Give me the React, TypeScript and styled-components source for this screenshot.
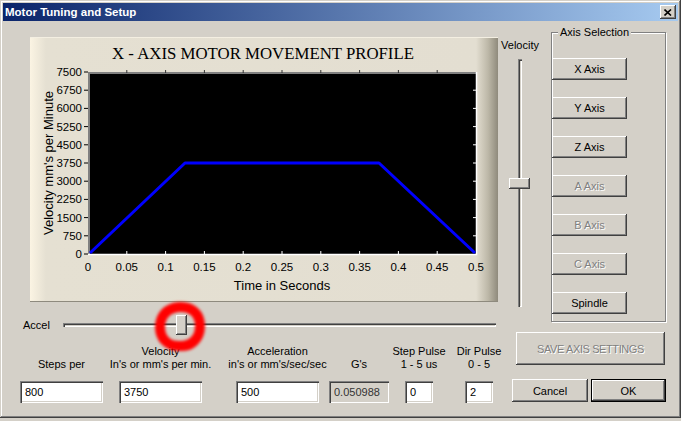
import React from "react";
import styled, {createGlobalStyle} from "styled-components";

const GlobalStyle = createGlobalStyle`
    html, body {
        margin: 0;
        padding: 0;
        background: #D4D0C8;
    }
    body {
        font-family: "Liberation Sans", Arial, sans-serif;
        font-size: 11px;
        color: #000;
    }
`

const Window = styled.div`
    width: 681px;
    height: 418px;
    box-sizing: border-box;
    padding: 3px;
    background: #D4D0C8;
    box-shadow: inset -1px -1px #404040, inset 1px 1px #D4D0C8,
                inset -2px -2px #808080, inset 2px 2px #FFFFFF;
    display: flex;
    flex-direction: column;
`

const TitleBar = styled.div`
    height: 18px;
    display: flex;
    align-items: center;
    justify-content: space-between;
    padding: 0 2px 0 2px;
    background: linear-gradient(to right, #0A246A, #A6CAF0);
`

const TitleText = styled.span`
    color: #FFF;
    font-weight: bold;
    font-size: 11.5px;
`

const raised = `
    background: #D4D0C8;
    box-shadow: inset -1px -1px #404040, inset 1px 1px #FFFFFF,
                inset -2px -2px #808080, inset 2px 2px #D4D0C8;
`

const CloseButton = styled.div`
    ${raised};
    width: 16px;
    height: 14px;
    display: flex;
    align-items: center;
    justify-content: center;
`

const Body = styled.div`
    display: flex;
    padding-left: 17px;
`

const LeftCol = styled.div`
    width: 480px;
    display: flex;
    flex-direction: column;
`

const ChartPanel = styled.div`
    margin: 16px 0 0 10px;
    width: 468px;
    height: 265px;
    box-sizing: border-box;
    display: flex;
    flex-direction: column;
    border-top: 1px solid #F4EFE2;
    border-bottom: 1px solid #8E8A7E;
    background: linear-gradient(to right, #FBF4E3 0, #E5E0D2 16px, #E3DED1 calc(100% - 22px),
                #BDB8A8 calc(100% - 10px), #8F8A7C 100%);
`

const ChartTitle = styled.div`
    height: 27px;
    box-sizing: border-box;
    padding-top: 8px;
    line-height: 16px;
    padding-right: 2px;
    text-align: center;
    font-family: "Liberation Serif", "Times New Roman", serif;
    font-size: 16.8px;
    color: #000;
`

const ChartSvg = styled.svg`
    display: block;
    overflow: visible;
    font-family: "Liberation Sans", Arial, sans-serif;
`

const AccelRow = styled.div`
    margin-top: 13px;
    height: 20px;
    display: flex;
    align-items: center;
`

const AccelLabel = styled.span`
    margin-left: 3px;
    width: 40px;
`

const HTrack = styled.div`
    position: relative;
    width: 433px;
    height: 4px;
    box-shadow: inset 1px 1px #808080, inset 2px 2px #404040,
                inset -1px -1px #FFFFFF, inset -2px -2px #D4D0C8;
`

const Thumb = styled.div<{ $w: number; $h: number }>`
    ${raised};
    position: absolute;
    width: ${p => p.$w}px;
    height: ${p => p.$h}px;
`

const Annotation = styled.svg`
    position: absolute;
    left: 87px;
    top: -24px;
    pointer-events: none;
`

const FieldsRow = styled.div`
    margin-top: 10px;
    display: flex;
    align-items: flex-start;
`

const Field = styled.div<{ $w: number; $ml: number }>`
    width: ${p => p.$w}px;
    margin-left: ${p => p.$ml}px;
    display: flex;
    flex-direction: column;
`

const Caption = styled.div`
    height: 26px;
    margin: 0 -40px;
    display: flex;
    flex-direction: column;
    justify-content: flex-end;
    align-items: center;
    line-height: 13px;
    white-space: nowrap;
`

const TextBox = styled.input<{ $readonly?: boolean }>`
    margin-top: 10px;
    height: 22px;
    width: 100%;
    box-sizing: border-box;
    border: none;
    outline: none;
    padding: 0 0 0 5px;
    font: inherit;
    color: ${p => p.$readonly ? '#333' : '#000'};
    background: ${p => p.$readonly ? '#D4D0C8' : '#FFFFFF'};
    box-shadow: inset 1px 1px #808080, inset 2px 2px #404040,
                inset -1px -1px #FFFFFF, inset -2px -2px #D4D0C8;
`

const RightCol = styled.div`
    width: 166px;
    display: flex;
    flex-direction: column;
`

const TopRow = styled.div`
    display: flex;
    align-items: flex-start;
`

const VelocityCol = styled.div`
    width: 40px;
    padding-top: 18px;
    display: flex;
    flex-direction: column;
    align-items: center;
    line-height: 13px;
`

const VTrack = styled.div`
    position: relative;
    margin-top: 7px;
    width: 4px;
    height: 248px;
    box-shadow: inset 1px 1px #808080, inset 2px 2px #404040,
                inset -1px -1px #FFFFFF, inset -2px -2px #D4D0C8;
`

const GroupBox = styled.div`
    position: relative;
    margin: 11px 0 0 11px;
    width: 115px;
    height: 290px;
    box-sizing: border-box;
    padding-top: 25px;
    border: 1px solid #808080;
    box-shadow: inset 1px 1px #FFFFFF, 1px 1px #FFFFFF;
    display: flex;
    flex-direction: column;
    gap: 17px;
`

const GroupLegend = styled.span`
    position: absolute;
    top: -7px;
    left: 6px;
    padding: 0 2px;
    line-height: 13px;
    background: #D4D0C8;
`

const Button = styled.button<{ $w: number; $h: number; $default?: boolean }>`
    width: ${p => p.$w}px;
    height: ${p => p.$h}px;
    padding: 0;
    border: none;
    font: inherit;
    color: #000;
    background: #D4D0C8;
    box-shadow: ${p => p.$default
        ? 'inset 0 0 0 1px #000, inset -2px -2px #404040, inset 2px 2px #FFFFFF, inset -3px -3px #808080'
        : 'inset -1px -1px #404040, inset 1px 1px #FFFFFF, inset -2px -2px #808080, inset 2px 2px #D4D0C8'};

    &:disabled {
        color: #808080;
        text-shadow: 1px 1px #FFFFFF;
    }
`

const SaveButton = styled(Button)`
    margin: 10px 0 0 16px;
    letter-spacing: -0.4px;
`

const DialogButtons = styled.div`
    margin: 14px 0 0 12px;
    display: flex;
    gap: 3px;
`

// geometry of the plot, in svg coordinates
const L = 58, R = 446, T = 7, B = 189
const yOf = (v: number) => B - (v / 7500) * (B - T)
const xOf = (t: number) => L + (t / 0.5) * (R - L)

const yTicks = Array.from({length: 11}, (_, i) => i * 750)
const xTicks = Array.from({length: 11}, (_, i) => parseFloat((i * 0.05).toFixed(2)))

const MotionChart = () => {
    const profile = [
        [xOf(0) + 2, B - 1],
        [xOf(0.125), yOf(3750)],
        [xOf(0.375), yOf(3750)],
        [xOf(0.5) - 1, B - 1],
    ].map(p => p.join(',')).join(' ')

    return (
        <ChartSvg width={468} height={236}>
            <rect x={L} y={T} width={R - L} height={B - T} fill="#000"/>
            <path d={`M${L + 1} ${B} V${T + 1} H${R}`} stroke="#808080" strokeWidth={2} fill="none"/>
            <path d={`M${L} ${B + 0.5} H${R + 0.5} V${T}`} stroke="#FFF" strokeWidth={1.5} fill="none"/>

            {yTicks.map(v => (
                <g key={v}>
                    <line x1={L - 4} x2={L} y1={yOf(v)} y2={yOf(v)} stroke="#000"/>
                    {v > 0 && v < 7500 &&
                        <line x1={R - 3} x2={R + 1} y1={yOf(v)} y2={yOf(v)} stroke="#FFF"/>}
                    <text x={52} y={yOf(v) + 4} fontSize={11.5} textAnchor="end">{v}</text>
                </g>
            ))}

            {xTicks.map(t => (
                <g key={t}>
                    {t > 0 && t < 0.5 && <>
                        <line x1={xOf(t)} x2={xOf(t)} y1={B - 3} y2={B + 1} stroke="#FFF"/>
                        <line x1={xOf(t)} x2={xOf(t)} y1={T - 2} y2={T + 1} stroke="#333"/>
                    </>}
                    <text x={xOf(t)} y={B + 17} fontSize={11.5} textAnchor="middle">{t}</text>
                </g>
            ))}

            <polyline points={profile} stroke="#0000FF" strokeWidth={3} fill="none" strokeLinejoin="round"/>

            <text x={252} y={B + 36} fontSize={13} textAnchor="middle">Time in Seconds</text>
            <text x={23} y={(T + B) / 2} fontSize={13} textAnchor="middle"
                  transform={`rotate(-90 23 ${(T + B) / 2})`}>Velocity mm's per Minute</text>
        </ChartSvg>
    )
}

const fields = [
    {top: '', bottom: 'Steps per', value: '800', w: 83, ml: 0},
    {top: 'Velocity', bottom: "In's or mm's per min.", value: '3750', w: 83, ml: 16},
    {top: 'Acceleration', bottom: "in's or mm's/sec/sec", value: '500', w: 83, ml: 34},
    {top: '', bottom: "G's", value: '0.050988', w: 60, ml: 10, readonly: true},
    {top: 'Step Pulse', bottom: '1 - 5 us', value: '0', w: 28, ml: 16},
    {top: 'Dir Pulse', bottom: '0 - 5', value: '2', w: 28, ml: 32},
]

const axes = [
    {label: 'X Axis', enabled: true},
    {label: 'Y Axis', enabled: true},
    {label: 'Z Axis', enabled: true},
    {label: 'A Axis', enabled: false},
    {label: 'B Axis', enabled: false},
    {label: 'C Axis', enabled: false},
    {label: 'Spindle', enabled: true},
]

export default function App() {
    return (
        <>
            <GlobalStyle/>
            <Window>
                <TitleBar>
                    <TitleText>Motor Tuning and Setup</TitleText>
                    <CloseButton>
                        <svg width={8} height={7} viewBox="0 0 8 7">
                            <path d="M0.5 0.5 L7 6.5 M7 0.5 L0.5 6.5" stroke="#000" strokeWidth={1.6}/>
                        </svg>
                    </CloseButton>
                </TitleBar>

                <Body>
                    <LeftCol>
                        <ChartPanel>
                            <ChartTitle>X - AXIS MOTOR MOVEMENT PROFILE</ChartTitle>
                            <MotionChart/>
                        </ChartPanel>

                        <AccelRow>
                            <AccelLabel>Accel</AccelLabel>
                            <HTrack>
                                <Thumb $w={11} $h={20} style={{left: 113, top: -8}}/>
                                <Annotation width={60} height={60}>
                                    <defs>
                                        <filter id="soft" x="-20%" y="-20%" width="140%" height="140%">
                                            <feGaussianBlur stdDeviation="1.5"/>
                                        </filter>
                                    </defs>
                                    <path
                                        d="M29 8 C42 7 50 15 50 27 C50 40 41 48 29 47 C17 47 10 39 10 28 C10 17 17 9 29 8 Z"
                                        stroke="#FF0000" strokeWidth={10} fill="none" filter="url(#soft)"/>
                                </Annotation>
                            </HTrack>
                        </AccelRow>

                        <FieldsRow>
                            {fields.map(f => (
                                <Field key={f.bottom} $w={f.w} $ml={f.ml}>
                                    <Caption>
                                        {f.top && <span>{f.top}</span>}
                                        <span>{f.bottom}</span>
                                    </Caption>
                                    <TextBox defaultValue={f.value} readOnly={f.readonly} $readonly={f.readonly}/>
                                </Field>
                            ))}
                        </FieldsRow>
                    </LeftCol>

                    <RightCol>
                        <TopRow>
                            <VelocityCol>
                                <span>Velocity</span>
                                <VTrack>
                                    <Thumb $w={21} $h={11} style={{left: -9, top: 119}}/>
                                </VTrack>
                            </VelocityCol>
                            <GroupBox>
                                <GroupLegend>Axis Selection</GroupLegend>
                                {axes.map(a => (
                                    <Button key={a.label} $w={75} $h={22} disabled={!a.enabled}>{a.label}</Button>
                                ))}
                            </GroupBox>
                        </TopRow>

                        <SaveButton $w={149} $h={33} disabled>SAVE AXIS SETTINGS</SaveButton>

                        <DialogButtons>
                            <Button $w={76} $h={23}>Cancel</Button>
                            <Button $w={75} $h={23} $default>OK</Button>
                        </DialogButtons>
                    </RightCol>
                </Body>
            </Window>
        </>
    );
}
